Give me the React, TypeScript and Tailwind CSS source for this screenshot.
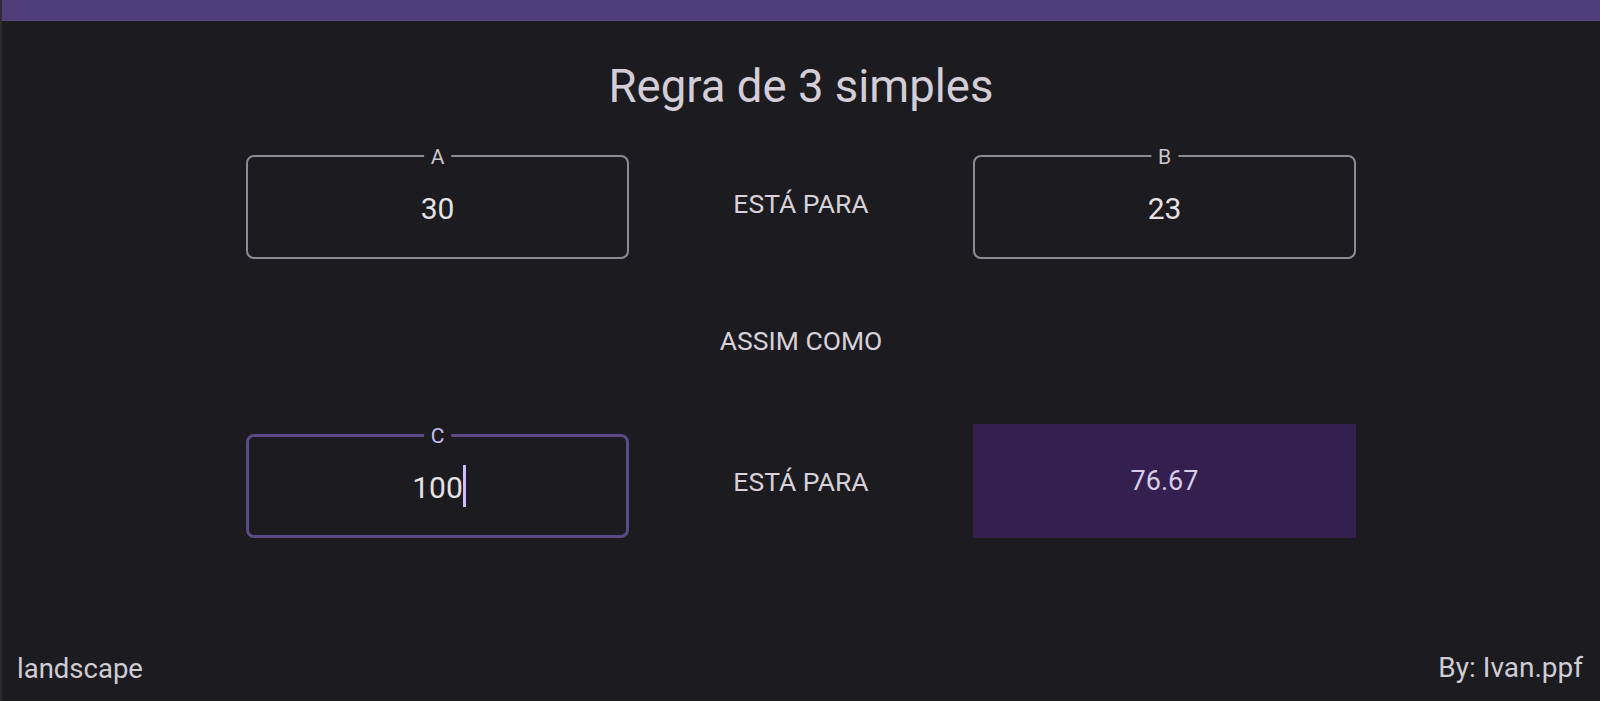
import React from 'react';

interface FieldProps {
  label: string;
  value: string;
  focused?: boolean;
}

const Field = ({ label, value, focused }: FieldProps) => {
  return (
    <div className="pt-[10px]">
      <div
        className={
          focused
            ? 'relative flex h-[104px] items-center justify-center rounded-[8px] border-[3px] border-[#5a4a87] pt-1'
            : 'relative flex h-[104px] items-center justify-center rounded-[8px] border-2 border-[#8e8a94] pt-1'
        }
      >
        <span
          className={
            focused
              ? 'absolute left-1/2 -top-[11px] -translate-x-1/2 bg-[#1c1b1f] px-[7px] text-[21px] leading-[21px] text-[#cbbcf0]'
              : 'absolute left-1/2 -top-[10px] -translate-x-1/2 bg-[#1c1b1f] px-[7px] text-[21px] leading-[21px] text-[#cac6ce]'
          }
        >
          {label}
        </span>
        <span className="relative inline-block text-[30px] leading-none text-[#e6e1e5]">
          {value}
          {focused && (
            <span className="absolute left-full top-[-8px] h-[42px] w-[3px] bg-[#cfbcff]" />
          )}
        </span>
      </div>
    </div>
  );
};

const App = () => {
  return (
    <div className="flex h-[701px] flex-col overflow-hidden border-l-2 border-[#2c2b30] bg-[#1c1b1f] font-['Roboto',sans-serif]">
      <div className="h-[21px] shrink-0 border-b border-[#5a4a86] bg-[#4f3e7a]" />

      <h1 className="mt-[40px] text-center text-[45.5px] leading-[52px] font-normal text-[#d2cdd6]">
        Regra de 3 simples
      </h1>

      <div className="mt-[32px] grid grid-cols-[383px_344px_383px] justify-center">
        <Field label="A" value="30" />
        <div className="flex items-center justify-center pt-[4px] text-[26.5px] leading-none text-[#d6d1da]">
          ESTÁ PARA
        </div>
        <Field label="B" value="23" />
      </div>

      <div className="flex h-[165px] items-center justify-center text-[26.5px] leading-none text-[#d6d1da]">
        ASSIM COMO
      </div>

      <div className="grid grid-cols-[383px_344px_383px] justify-center">
        <Field label="C" value="100" focused />
        <div className="flex items-center justify-center pt-[2px] text-[26.5px] leading-none text-[#d6d1da]">
          ESTÁ PARA
        </div>
        <div className="flex h-[114px] items-center justify-center bg-[#33204e] text-[27px] leading-none text-[#d8cde8]">
          76.67
        </div>
      </div>

      <div className="flex-1" />

      <div className="flex items-end justify-between pb-[19px] pl-[15px] pr-[17px] text-[28px] leading-none text-[#d0ccd4]">
        <span className="text-[27.5px]">landscape</span>
        <span>By: Ivan.ppf</span>
      </div>
    </div>
  );
};

export default App;
